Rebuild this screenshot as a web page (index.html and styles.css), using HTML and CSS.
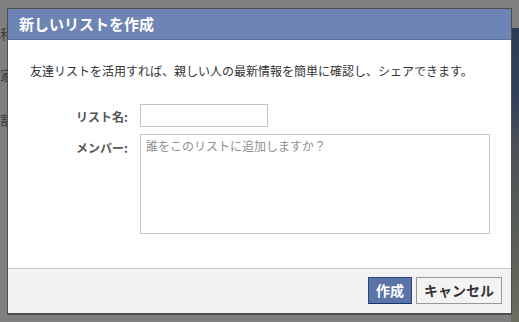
FILE: index.html
```html
<!DOCTYPE html>
<html lang="ja">
<head>
    <meta charset="UTF-8">
    <meta name="viewport" content="width=device-width, initial-scale=1.0">
    <title>新しいリストを作成</title>
    <link rel="stylesheet" href="styles.css">
</head>
<body>

    <div class="page">
        <div class="bg-text">
            <p class="bg-line1">和</p>
            <p class="bg-line2">家</p>
            <p class="bg-line3">割</p>
        </div>
        <div class="bg-photo"></div>
    </div>

    <div class="dialog">
        <h1 class="title">新しいリストを作成</h1>
        <div class="content">
            <p class="intro">友達リストを活用すれば、親しい人の最新情報を簡単に確認し、シェアできます。</p>
            <form class="fields" action="">
                <label class="lbl" for="listname">リスト名:</label>
                <input class="name" type="text" id="listname">
                <label class="lbl" for="members">メンバー:</label>
                <textarea class="members" id="members" placeholder="誰をこのリストに追加しますか？"></textarea>
            </form>
        </div>
        <div class="footer">
            <button class="btn btn-primary" type="button">作成</button>
            <button class="btn" type="button">キャンセル</button>
        </div>
    </div>

</body>
</html>
```

FILE: styles.css
```css
*{
    margin: 0;
    padding: 0;
    box-sizing: border-box;
}
body{
    width: 519px;
    height: 322px;
    overflow: hidden;
    background: #7f7f7f;
    font-family: "Noto Sans CJK JP", "Noto Sans", sans-serif;
    position: relative;
}
.page{
    width: 519px;
    height: 322px;
    position: relative;
}
.bg-text{
    position: absolute;
    left: 0;
    top: 0;
    color: #3a3a3a;
    font-size: 13px;
}
.bg-line1{ margin-top: 24px; }
.bg-line2{ margin-top: 22px; }
.bg-line3{ margin-top: 26px; }
.bg-photo{
    position: absolute;
    right: 0;
    top: 28px;
    width: 8px;
    height: 294px;
    background: linear-gradient(#2f3c57 0, #33405a 70px, #4d5157 120px, #5c5f58 220px, #6a6d5e 294px);
}
.dialog{
    position: absolute;
    left: 7px;
    top: 8px;
    width: 505px;
    border: 1px solid #4e4e4e;
    border-bottom-width: 2px;
    background: #fff;
}
.title{
    height: 31px;
    background: #6d84b4;
    border-bottom: 1px solid #5c71a0;
    color: #fff;
    font-size: 15px;
    font-weight: bold;
    line-height: 30px;
    padding-left: 11px;
}
.content{
    padding: 22px 0 34px 22px;
    color: #333;
}
.intro{
    font-size: 12px;
    line-height: 17px;
}
.fields{
    display: grid;
    grid-template-columns: 98px 350px;
    column-gap: 12px;
    row-gap: 7px;
    margin-top: 25px;
}
.lbl{
    text-align: right;
    font-size: 12px;
    font-weight: bold;
    color: #555;
    line-height: 16px;
}
.lbl:first-child{
    margin-top: 5px;
}
.lbl:nth-child(3){
    margin-top: 6px;
}
.name{
    width: 128px;
    height: 23px;
    border: 1px solid #c4c4c4;
    outline: none;
}
.members{
    width: 350px;
    height: 100px;
    border: 1px solid #c4c4c4;
    resize: none;
    outline: none;
    padding: 3px 5px;
    font-family: "Noto Sans CJK JP", "Noto Sans", sans-serif;
    font-size: 12px;
    line-height: 16px;
}
.members::placeholder{
    color: #8f8f8f;
}
.footer{
    background: #f2f2f2;
    border-top: 1px solid #c6c6c6;
    height: 45px;
    display: flex;
    justify-content: flex-end;
    align-items: flex-start;
    gap: 4px;
    padding: 8px 9px 0 0;
}
.btn{
    height: 27px;
    padding: 0 7px;
    border: 1px solid #999;
    background: #f3f3f3;
    color: #333;
    font-family: "Noto Sans CJK JP", "Noto Sans", sans-serif;
    font-size: 14px;
    font-weight: bold;
    line-height: 25px;
}
.btn-primary{
    background: #5b74a8;
    border-color: #29447e #29447e #1a356e;
    color: #fff;
    padding: 0 7px;
}
```
